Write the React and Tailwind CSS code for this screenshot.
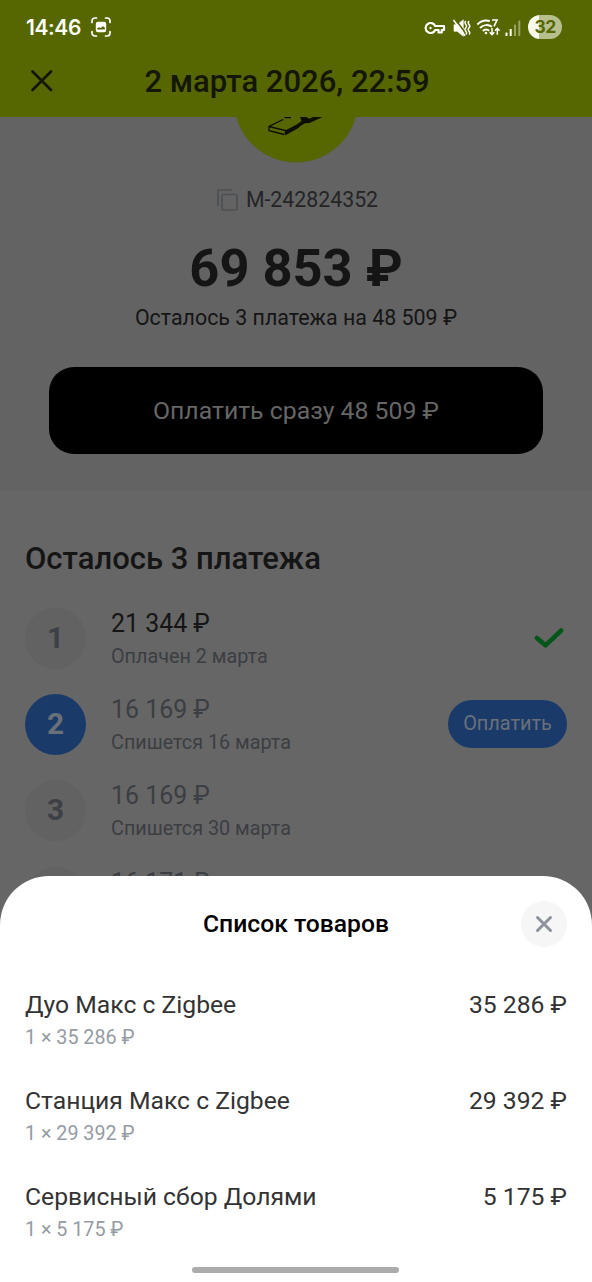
import React from "react";

const payments = [
  { n: "1", sum: "21 344 ₽", note: "Оплачен 2 марта", state: "paid" },
  { n: "2", sum: "16 169 ₽", note: "Спишется 16 марта", state: "next" },
  { n: "3", sum: "16 169 ₽", note: "Спишется 30 марта", state: "later" },
  { n: "", sum: "16 171 ₽", note: "", state: "later" },
];

const items = [
  { name: "Дуо Макс с Zigbee", sum: "35 286 ₽", qty: "1 × 35 286 ₽" },
  { name: "Станция Макс с Zigbee", sum: "29 392 ₽", qty: "1 × 29 392 ₽" },
  { name: "Сервисный сбор Долями", sum: "5 175 ₽", qty: "1 × 5 175 ₽" },
];

function StatusBar() {
  return (
    <div className="flex h-[54px] items-center justify-between pl-[26px] pr-[30px] text-white">
      <div className="flex items-center gap-[9px]">
        <span className="w-[56px] whitespace-nowrap pt-px font-['Inter',sans-serif] text-[21px] font-semibold leading-6 tracking-[-0.4px]">14:46</span>
        <svg width="20" height="20" viewBox="0 0 20 20" fill="none" stroke="currentColor" strokeWidth="1.7" strokeLinecap="round">
          <path d="M1 5.500V4a3 3 0 0 1 3-3h1.500M14.500 1H16a3 3 0 0 1 3 3v1.500M19 14.500V16a3 3 0 0 1-3 3h-1.500M5.500 19H4a3 3 0 0 1-3-3v-1.500" />
          <path fillRule="evenodd" stroke="none" fill="currentColor" d="M7 4.800h6a2.200 2.200 0 0 1 2.200 2.200v6a2.200 2.200 0 0 1-2.200 2.200H7a2.200 2.200 0 0 1-2.200-2.200V7A2.200 2.200 0 0 1 7 4.800ZM6.300 12.600h7.500V10.500l-2-1.200-2 1.800-1.500-.8-2 1Z" />
        </svg>
      </div>
      <div className="flex items-center">
        <svg width="104" height="26" viewBox="0 0 104 26" fill="none" stroke="currentColor">
          <g strokeWidth="2.200" strokeLinejoin="round">
            <path d="M11.200 12A5 5 0 1 0 11.200 16H14.500V18.500H17.800V16H20V12Z" />
            <circle cx="6.500" cy="14" r="0.900" fill="currentColor" strokeWidth="0.600" />
          </g>
          <path d="M30 10.700h3.200L39.300 5.800v16.500l-6.100-5H30Z" fill="currentColor" strokeWidth="0.600" />
          <path d="M31 5 43 21" stroke="#566600" strokeWidth="1.600" />
          <path d="M29.500 6 41 21.800" strokeWidth="1.600" />
          <path d="M41.800 7q-1.600 1.700 0 3.400t0 3.400 0 3.400 0 3.400M45 7q-1.600 1.700 0 3.400t0 3.400 0 3.400 0 3.400" strokeWidth="1.400" />
          <g strokeWidth="1.900">
            <path d="M53.300 10.500a13 13 0 0 1 12.500-3.500M56 14a9 9 0 0 1 12-1.200M58.800 17a5 5 0 0 1 6.500-.2" />
            <path d="M68 6h5L70 12.300" strokeWidth="1.600" />
            <path d="M68 14v6.500m-2.300-2.300 2.300 2.500 2.300-2.500M73.300 20.800v-6.300m-2.300 2.300 2.300-2.500 2.300 2.500" strokeWidth="1.500" />
          </g>
          <circle cx="62" cy="19" r="1.300" fill="currentColor" stroke="none" />
          <g fill="currentColor" stroke="none">
            <rect x="81.500" y="18.500" width="2" height="3.500" rx=".6" />
            <rect x="85.700" y="15" width="2" height="7" rx=".6" />
            <rect x="90" y="10.500" width="2" height="11.500" rx=".6" opacity=".4" />
            <rect x="94.300" y="6.500" width="2" height="15.500" rx=".6" opacity=".4" />
          </g>
        </svg>
        <span className="flex h-[24px] w-[34px] items-center justify-center rounded-full bg-linear-to-r from-[#f8faf0] from-31% to-[#b7c08d] to-31% font-['Inter',sans-serif] text-[17.500px] font-bold leading-none tracking-[-0.700px] text-[#566600]">32</span>
      </div>
    </div>
  );
}

function Payment({ n, sum, note, state }) {
  return (
    <li className="flex h-[86.4px] items-start">
      <span className={state === "next"
        ? "flex size-[61px] items-center justify-center rounded-full bg-[#1a3b6a] text-[29.800px] font-bold text-[#6a7078]"
        : "flex size-[61px] items-center justify-center rounded-full bg-[#626262] text-[29.800px] font-bold text-[#3d4045]"}>{n}</span>
      <span className="ml-[25px] flex grow flex-col whitespace-nowrap">
        <span className={state === "paid"
          ? "text-[24.900px] leading-[32px] text-[#151515]"
          : "text-[24.900px] leading-[32px] text-[#3b3e42]"}>{sum}</span>
        <span className="mt-[3px] text-[19.800px] leading-[28px] text-[#3b3e42]">{note}</span>
      </span>
      {state === "paid" && (
        <svg className="mr-[2px] mt-[18px]" width="32" height="24" viewBox="0 0 32 24" fill="none" stroke="#04551a" strokeWidth="4.500" strokeLinecap="round" strokeLinejoin="round">
          <path d="M3.800 12 12.500 19.300 28.200 4.500" />
        </svg>
      )}
      {state === "next" && (
        <button className="mt-[6px] h-[48px] w-[119px] rounded-full bg-[#1a3b6a] pt-px text-[19.900px] text-[#6a7078]">Оплатить</button>
      )}
    </li>
  );
}

export default function App() {
  return (
    <div className="relative h-[1282px] w-[592px] overflow-hidden bg-[#666666] font-['Roboto',sans-serif]">
      <header className="h-[117px] bg-[#566600]">
        <StatusBar />
        <div className="flex h-[54px] items-center">
          <svg className="ml-[30px]" width="24" height="24" viewBox="0 0 24 24" fill="none" stroke="#141608" strokeWidth="2.700" strokeLinecap="round">
            <path d="m2.500 2.500 18.500 18.500M21 2.500 2.500 21" />
          </svg>
          <h1 className="ml-[90.5px] whitespace-nowrap pt-px text-[31px] font-medium leading-9 text-[#141608]">2 марта 2026, 22:59</h1>
        </div>
      </header>

      <section className="flex h-[374px] flex-col items-center bg-[#636363] text-[#151515]">
        <div className="flex h-[46px] w-[124px] items-end overflow-hidden">
          <svg width="124" height="124" viewBox="0 0 124 124" className="shrink-0">
            <circle cx="62" cy="61.500" r="62" fill="#566600" />
            <path d="M50.500 78.700H57M49 80.500 35 87.500v4.200l15.500 3.800" fill="none" stroke="#0c0f00" strokeWidth="1.300" />
            <path d="M35 87.500l16.500 4V95.500" fill="none" stroke="#0c0f00" strokeWidth="1.300" />
            <path d="M51.500 91.300 57 88.500q7-3.500 10.500-6.500L66 78h6l3.500 1.800L79 78H88.500L75.500 84 71 84.200q-4 2-7 5L51.500 96.200Z" fill="#0c0f00" />
          </svg>
        </div>
        <div className="mt-[22px] flex h-[30px] items-center gap-[8px] pl-[3px]">
          <svg width="21" height="22" viewBox="0 0 21 22" fill="none" stroke="#4d5054" strokeWidth="1.700">
            <rect x="5" y="5.500" width="15" height="15.500" rx="1.500" />
            <path d="M1 17V1h14" />
          </svg>
          <span className="text-[21.300px] leading-7 text-[#242527]">М-242824352</span>
        </div>
        <div className="mt-[20px] whitespace-nowrap text-[52.400px] font-bold leading-[66px]">69 853 ₽</div>
        <div className="mt-[3px] whitespace-nowrap text-[21.400px] leading-[28px]">Осталось 3 платежа на 48 509 ₽</div>
        <button className="mt-[35px] h-[87px] w-[494px] rounded-[25px] bg-black pt-px text-[24.800px] text-[#666666]">Оплатить сразу 48 509 ₽</button>
      </section>

      <section className="px-[25px] pt-[48px]">
        <h2 className="whitespace-nowrap text-[31px] font-medium leading-[40px] text-[#151515]">Осталось 3 платежа</h2>
        <ul className="mt-[28.5px]">
          {payments.map((p) => <Payment key={p.sum + p.note} {...p} />)}
        </ul>
      </section>

      <section className="absolute inset-x-0 bottom-0 flex h-[406px] flex-col rounded-t-[49px] bg-white px-[25px]">
        <div className="flex h-[95px] items-center justify-between">
          <span className="size-[46px]" />
          <h3 className="whitespace-nowrap pt-px text-[24.700px] font-medium text-black">Список товаров</h3>
          <button className="flex size-[46px] items-center justify-center rounded-full bg-[#f6f6f6]">
            <svg width="18" height="18" viewBox="0 0 18 18" fill="none" stroke="#8d929e" strokeWidth="3" strokeLinecap="round">
              <path d="m2.500 2.500 13 13M15.500 2.500l-13 13" />
            </svg>
          </button>
        </div>
        <ul className="mt-[17px] flex flex-col whitespace-nowrap">
          {items.map((i) => (
            <li key={i.name} className="h-[96px]">
              <div className="flex justify-between text-[24.700px] leading-[34px] text-[#333333]">
                <span>{i.name}</span>
                <span>{i.sum}</span>
              </div>
              <div className="text-[19.700px] leading-[32px] text-[#959ba4]">{i.qty}</div>
            </li>
          ))}
        </ul>
        <div className="absolute bottom-[9px] left-[192px] h-[6px] w-[207px] rounded-full bg-[#acacac]" />
      </section>
    </div>
  );
}
